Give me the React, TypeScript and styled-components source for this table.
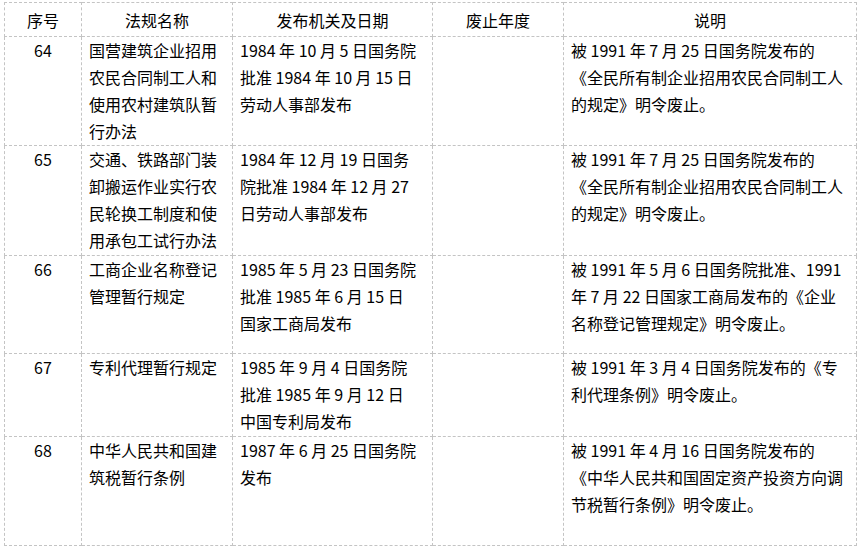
import { FC } from "react";
import styled, { createGlobalStyle } from "styled-components";

//types
type Row = {
  no: string;
  name: string[];
  issuer: string[];
  year: string[];
  note: string[];
  height: number;
};

const rows: Row[] = [
  {
    no: "64",
    name: ["国营建筑企业招用", "农民合同制工人和", "使用农村建筑队暂", "行办法"],
    issuer: ["1984 年 10 月 5 日国务院", "批准 1984 年 10 月 15 日", "劳动人事部发布"],
    year: [],
    note: ["被 1991 年 7 月 25 日国务院发布的", "《全民所有制企业招用农民合同制工人", "的规定》明令废止。"],
    height: 109,
  },
  {
    no: "65",
    name: ["交通、铁路部门装", "卸搬运作业实行农", "民轮换工制度和使", "用承包工试行办法"],
    issuer: ["1984 年 12 月 19 日国务", "院批准 1984 年 12 月 27", "日劳动人事部发布"],
    year: [],
    note: ["被 1991 年 7 月 25 日国务院发布的", "《全民所有制企业招用农民合同制工人", "的规定》明令废止。"],
    height: 110,
  },
  {
    no: "66",
    name: ["工商企业名称登记", "管理暂行规定"],
    issuer: ["1985 年 5 月 23 日国务院", "批准 1985 年 6 月 15 日", "国家工商局发布"],
    year: [],
    note: ["被 1991 年 5 月 6 日国务院批准、1991", "年 7 月 22 日国家工商局发布的《企业", "名称登记管理规定》明令废止。"],
    height: 98,
  },
  {
    no: "67",
    name: ["专利代理暂行规定"],
    issuer: ["1985 年 9 月 4 日国务院", "批准 1985 年 9 月 12 日", "中国专利局发布"],
    year: [],
    note: ["被 1991 年 3 月 4 日国务院发布的《专", "利代理条例》明令废止。"],
    height: 83,
  },
  {
    no: "68",
    name: ["中华人民共和国建", "筑税暂行条例"],
    issuer: ["1987 年 6 月 25 日国务院", "发布"],
    year: [],
    note: ["被 1991 年 4 月 16 日国务院发布的", "《中华人民共和国固定资产投资方向调", "节税暂行条例》明令废止。"],
    height: 109,
  },
];

const columns = [
  { title: "序号", width: 77 },
  { title: "法规名称", width: 151 },
  { title: "发布机关及日期", width: 200 },
  { title: "废止年度", width: 131 },
  { title: "说明", width: 293 },
];

const GlobalStyle = createGlobalStyle`
  html, body {
    margin: 0;
    padding: 0;
    background: #ffffff;
  }
  body {
    font-family: "Noto Sans CJK SC", "Noto Sans", sans-serif;
    color: #000000;
  }
`;

const Page = styled.div`
  padding: 2px 0 0 4px;
`;

const Table = styled.table`
  border-collapse: collapse;
  table-layout: fixed;
  width: 852px;
  font-size: 16px;
`;

const HeadCell = styled.th`
  border: 1px dashed #c4c4c4;
  height: 33px;
  padding: 0;
  font-weight: 400;
  text-align: center;
  vertical-align: middle;
  line-height: 20px;
`;

const BodyRow = styled.tr<{ $height: number }>`
  height: ${(p) => p.$height}px;
`;

const Cell = styled.td<{ $center?: boolean }>`
  border: 1px dashed #c4c4c4;
  padding: 0 0 0 ${(p) => (p.$center ? 0 : 7)}px;
  vertical-align: top;
  text-align: ${(p) => (p.$center ? "center" : "left")};
  line-height: 27px;
`;

const Line = styled.span`
  display: block;
  white-space: nowrap;
`;

const Lines: FC<{ items: string[] }> = ({ items }) => (
  <>
    {items.map((t, i) => (
      <Line key={i}>{t}</Line>
    ))}
  </>
);

const App: FC = () => {
  return (
    <Page>
      <GlobalStyle />
      <Table>
        <colgroup>
          {columns.map((c) => (
            <col key={c.title} style={{ width: c.width }} />
          ))}
        </colgroup>
        <thead>
          <tr>
            {columns.map((c) => (
              <HeadCell key={c.title}>{c.title}</HeadCell>
            ))}
          </tr>
        </thead>
        <tbody>
          {rows.map((r) => (
            <BodyRow key={r.no} $height={r.height}>
              <Cell $center>{r.no}</Cell>
              <Cell>
                <Lines items={r.name} />
              </Cell>
              <Cell>
                <Lines items={r.issuer} />
              </Cell>
              <Cell>
                <Lines items={r.year} />
              </Cell>
              <Cell>
                <Lines items={r.note} />
              </Cell>
            </BodyRow>
          ))}
        </tbody>
      </Table>
    </Page>
  );
};

export default App;
